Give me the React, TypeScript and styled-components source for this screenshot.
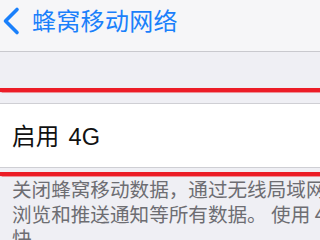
import styled, { createGlobalStyle } from "styled-components";

const Global = createGlobalStyle`
  html, body {
    margin: 0;
    padding: 0;
    background: #efeff4;
  }
  body {
    width: 320px;
    height: 240px;
    overflow: hidden;
    font-family: "Noto Sans CJK SC", "Noto Sans", sans-serif;
  }
`;

const Screen = styled.div`
  width: 360px;
  background: #efeff4;
  display: flex;
  flex-direction: column;
`;

const NavBar = styled.div`
  height: 45px;
  flex-shrink: 0;
  background: #f6f6f8;
  border-bottom: 1px solid #c9c9ce;
  display: flex;
  align-items: flex-start;
  padding: 6px 0 0 0;
`;

const BackIcon = styled.svg`
  width: 20px;
  height: 30px;
  flex-shrink: 0;
`;

const Title = styled.div`
  margin-left: 12px;
  font-size: 24px;
  line-height: 28px;
  color: #1a80fb;
  letter-spacing: 0.3px;
`;

const Gap = styled.div<{ $h: number }>`
  height: ${(p) => p.$h}px;
  flex-shrink: 0;
`;

const RedMark = styled.div`
  height: 4px;
  flex-shrink: 0;
  background: #ec1c26;
  box-shadow: 0 0 1px 0.5px rgba(236, 28, 38, 0.45);
`;

const Row = styled.div`
  height: 63px;
  flex-shrink: 0;
  background: #ffffff;
  border-top: 1px solid #cfcfd4;
  border-bottom: 1px solid #cfcfd4;
  display: flex;
  align-items: center;
  padding-left: 12px;
`;

const RowLabel = styled.div`
  font-family: "Liberation Sans", "Noto Sans CJK SC", sans-serif;
  font-size: 23.5px;
  color: #111;
  letter-spacing: 0.3px;
  word-spacing: 2px;
  margin-top: -2px;
`;

const Footnote = styled.div`
  flex-shrink: 0;
  padding: 1px 0 0 12px;
  font-size: 19.6px;
  line-height: 24.5px;
  color: #6d6d72;
`;

const Line = styled.div`
  white-space: nowrap;
`;

export default function App() {
  return (
    <Screen>
      <Global />
      <NavBar>
        <BackIcon viewBox="0 0 20 30">
          <path
            d="M17 3.5 L5.5 15 L17 26.5"
            fill="none"
            stroke="#1a80fb"
            strokeWidth="3.6"
            strokeLinecap="round"
            strokeLinejoin="round"
          />
        </BackIcon>
        <Title>蜂窝移动网络</Title>
      </NavBar>
      <Gap $h={36} />
      <RedMark />
      <Gap $h={11} />
      <Row>
        <RowLabel>启用 4G</RowLabel>
      </Row>
      <Gap $h={4} />
      <RedMark />
      <Footnote>
        <Line>关闭蜂窝移动数据，通过无线局域网</Line>
        <Line>浏览和推送通知等所有数据。 使用 4G 数据加载更</Line>
        <Line>快。</Line>
      </Footnote>
    </Screen>
  );
}
